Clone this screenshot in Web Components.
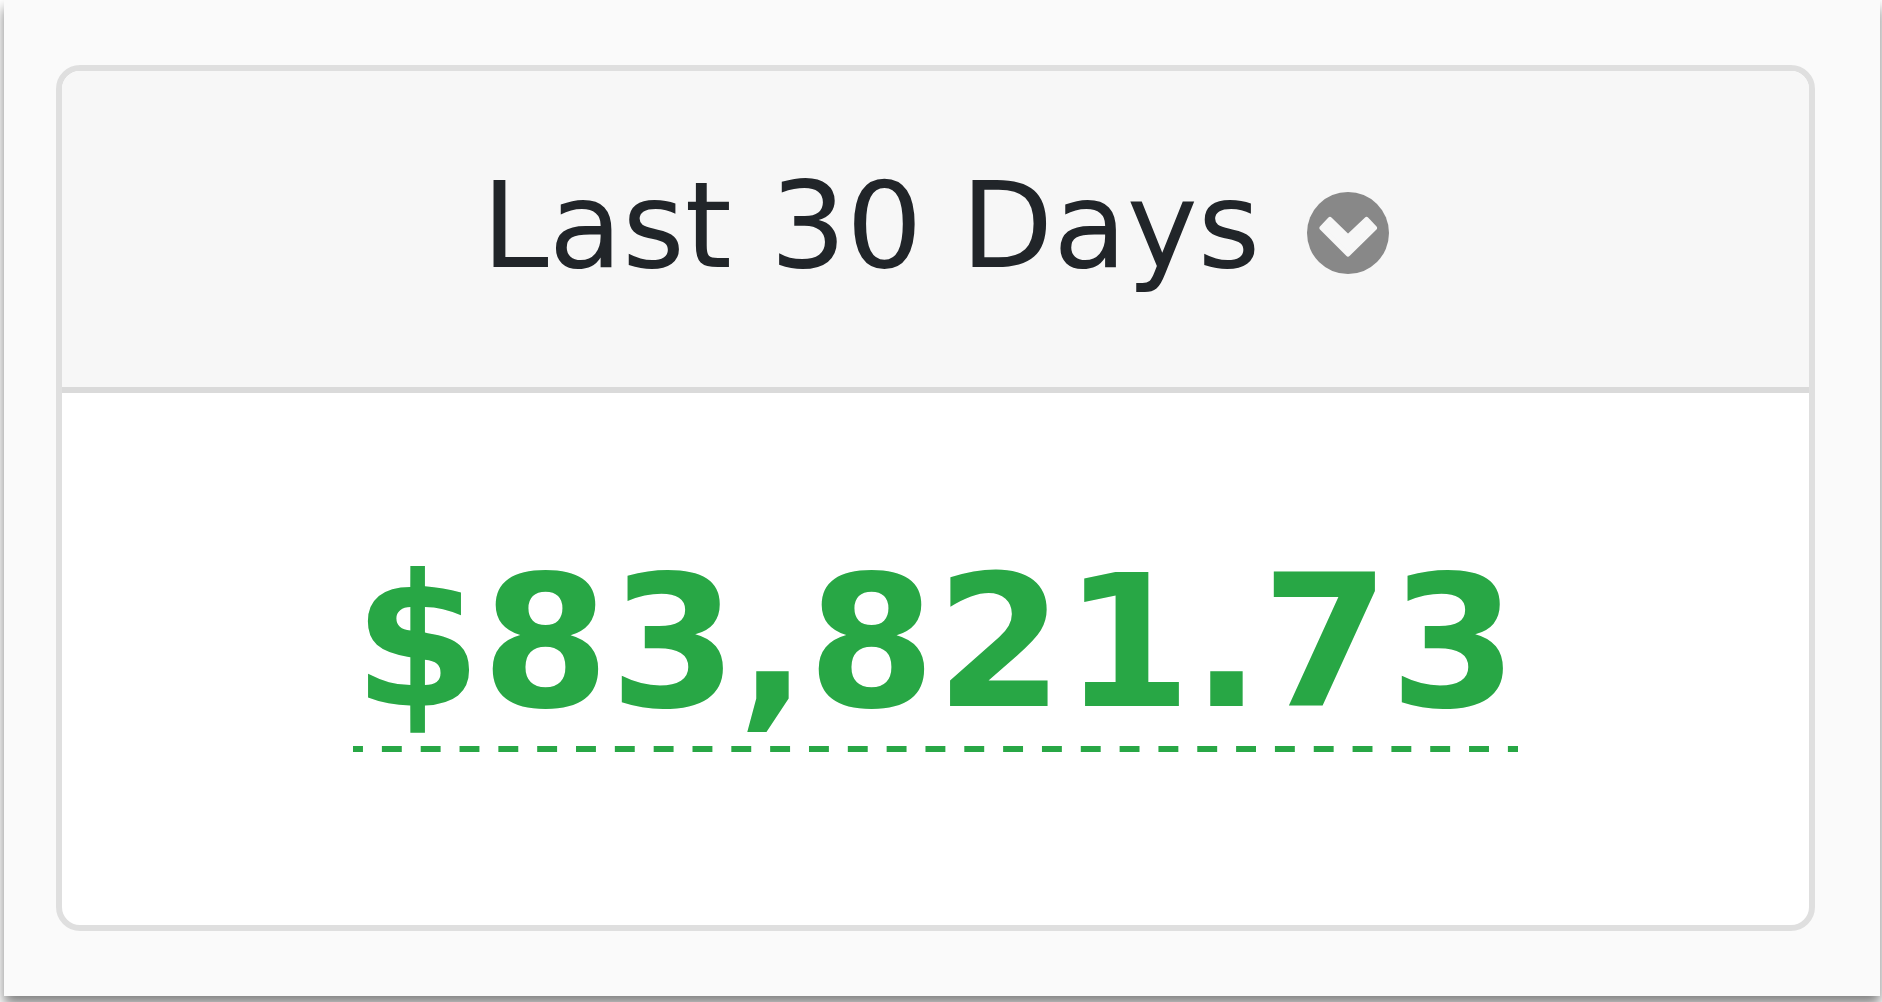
<!DOCTYPE html>
<html lang="en">
<head>
<meta charset="utf-8">
<meta name="viewport" content="width=device-width, initial-scale=1">
<title>Last 30 Days</title>
<style>
  body { margin: 0; background: #fff; color: #212529; overflow: hidden; font-family: Verdana, "DejaVu Sans", sans-serif; }
</style>
</head>
<body>
<window-frame>
  <stat-card>
    <period-picker slot="header">Last 30 Days</period-picker>
    <stat-amount>$83,821.73</stat-amount>
  </stat-card>
</window-frame>
<script>
const define = (name, html) => {
  const template = document.createElement('template');
  template.innerHTML = html;
  customElements.define(name, class extends HTMLElement {
    constructor() {
      super();
      this.attachShadow({ mode: 'open' }).append(template.content.cloneNode(true));
    }
  });
};

define('window-frame', `
  <style>
    :host { display: block; margin: 0 2px 6px 4px; padding: 65px 65px 65px 52px; background: #fafafa;
      box-shadow: 0 8px 12px rgba(0, 0, 0, .5); }
  </style>
  <slot></slot>`);

define('stat-card', `
  <style>
    :host { display: block; border: 6px solid #dfdfdf; border-radius: 24px; overflow: hidden; background: #fff; }
    header { display: flex; justify-content: center; padding: 85px 24px 91px; background: #f7f7f7; border-bottom: 6px solid #dadada; }
    main { display: flex; justify-content: center; padding: 142px 24px 173px; }
  </style>
  <header><slot name="header"></slot></header>
  <main><slot></slot></main>`);

define('period-picker', `
  <style>
    :host { display: block; }
    button { display: flex; align-items: center; gap: 47px; margin: 0; padding: 0; border: 0; background: none;
      color: inherit; font: inherit; font-size: 120px; line-height: 140px; white-space: nowrap; cursor: pointer; }
    svg { width: 82px; height: 82px; padding-top: 14px; flex: none; }
  </style>
  <button type="button" aria-haspopup="listbox">
    <span><slot></slot></span>
    <svg viewBox="0 0 82 82" aria-hidden="true">
      <circle cx="41" cy="41" r="41" fill="#888"/>
      <path d="M15 36 L23 27.500 L41 45 L59.500 27.500 L67.500 36 L41 62 Z" fill="#f7f7f7" stroke="#f7f7f7" stroke-width="5" stroke-linejoin="round"/>
    </svg>
  </button>`);

define('stat-amount', `
  <style>
    :host { display: block; }
    a { display: block; padding-bottom: 3px; color: #28a745; font-size: 184px; font-weight: 700; line-height: 214px;
      white-space: nowrap; text-decoration: none;
      background: linear-gradient(90deg, #28a745 26%, transparent 26% 74%, #28a745 74%) left bottom / 39px 6px round no-repeat; }
  </style>
  <a href="#details"><slot></slot></a>`);
</script>
</body>
</html>
